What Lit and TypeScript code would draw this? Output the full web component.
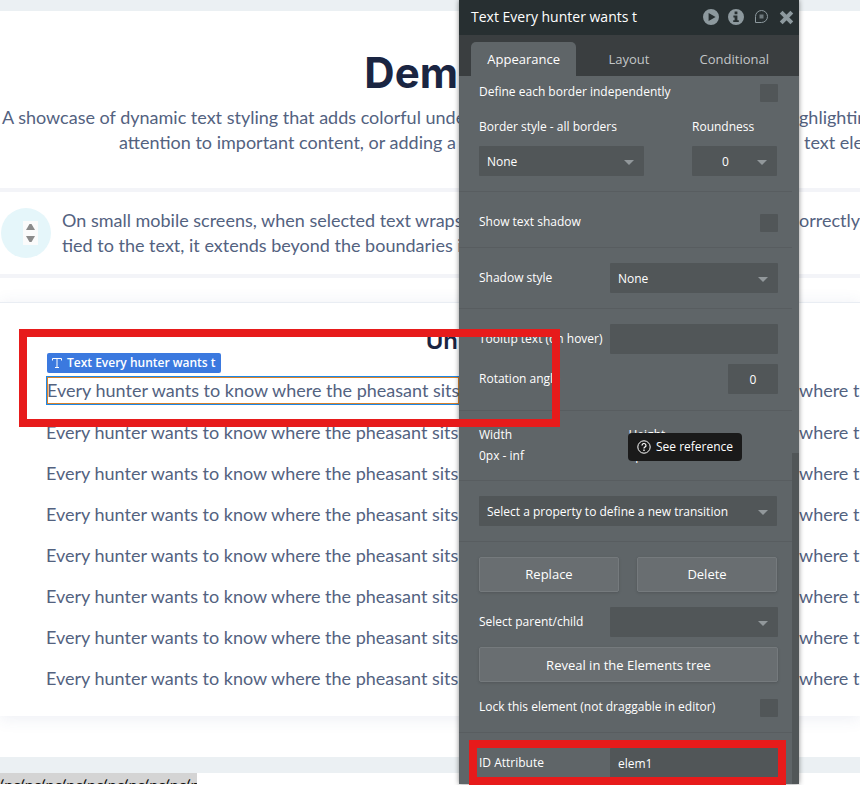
import { LitElement, html, css, svg } from "lit";
import { customElement, property } from "lit/decorators.js";

const ROWS = Array.from({ length: 7 }, (_, i) => i);
const SENTENCE = "Every hunter wants to know where the pheasant sits.";

@customElement("drop-down")
class DropDown extends LitElement {
  static styles = css`
    :host {
      display: block;
      position: relative;
    }
    select {
      appearance: none;
      display: block;
      box-sizing: border-box;
      width: 100%;
      height: 30px;
      margin: 0;
      padding: 2px 24px 0 8px;
      border: 0;
      border-radius: 1px;
      background: #515658;
      color: #fff;
      font: 500 12px/28px "Open Sans", sans-serif;
    }
    select.centered {
      padding: 2px 18px 0 0;
      text-align: center;
      text-align-last: center;
    }
    .arrow {
      position: absolute;
      right: 10px;
      top: 14px;
      width: 10px;
      height: 5px;
      background: #92989b;
      clip-path: polygon(0 0, 100% 0, 50% 100%);
      pointer-events: none;
    }
  `;
  @property() value = "";
  @property() name = "";
  @property({ type: Boolean }) centered = false;

  render() {
    return html`<select class=${this.centered ? "centered" : ""} aria-label=${this.name}>
        <option>${this.value}</option>
      </select>
      <span class="arrow"></span>`;
  }
}

@customElement("property-editor")
class PropertyEditor extends LitElement {
  static styles = css`
    :host {
      display: block;
      box-sizing: border-box;
      background: #5f6568;
      color: #fff;
      font: 500 12px/20px "Open Sans", sans-serif;
      box-shadow: 0 0 5px rgba(0, 0, 0, 0.45);
    }
    header {
      display: flex;
      align-items: center;
      height: 35px;
      padding: 0 5px 0 12px;
      background: #272f31;
      font-size: 14px;
    }
    h2 {
      flex: 1;
      margin: 0;
      padding-bottom: 2px;
      font-size: 14px;
      font-weight: 500;
    }
    .tools {
      display: flex;
      gap: 9px;
      padding-bottom: 2px;
    }
    .tools button {
      display: block;
      width: 16px;
      height: 16px;
      padding: 0;
      border: 0;
      background: none;
      color: #8d999e;
    }
    .tools svg {
      display: block;
    }
    nav {
      display: grid;
      grid-template-columns: repeat(3, 1fr);
      height: 34px;
      padding: 7px 12px 0;
      background: #3a3e40;
    }
    nav button {
      padding: 0;
      border: 0;
      border-radius: 5px 5px 0 0;
      background: none;
      color: #c3c6c8;
      font: 500 13px/34px "Open Sans", sans-serif;
    }
    nav button.active {
      background: #5f6568;
      color: #fff;
    }
    .body {
      position: relative;
      padding-right: 7px;
    }
    .thumb {
      position: absolute;
      right: 0;
      top: 377px;
      bottom: 0;
      width: 7px;
      background: #515658;
    }
    section {
      padding: 15px 14px 15px 20px;
      border-bottom: 1px solid #585d60;
    }
    section.first {
      padding-top: 8px;
    }
    section.loose {
      padding-top: 22px;
    }
    section.angle {
      padding-bottom: 16px;
    }
    section.size {
      padding: 14px 14px 14px 20px;
    }
    section.last {
      padding-bottom: 6px;
      border: 0;
    }
    .row {
      display: flex;
      justify-content: space-between;
      align-items: center;
    }
    .check {
      height: 18px;
    }
    .check label {
      padding-bottom: 2px;
    }
    .gap-s {
      margin-top: 10px;
    }
    .gap-m {
      margin-top: 15px;
    }
    .short {
      padding-right: 1px;
    }
    input {
      box-sizing: border-box;
      margin: 0;
      border: 0;
      border-radius: 1px;
      background: #515658;
      color: #fff;
      font: 500 12px/20px "Open Sans", sans-serif;
    }
    input[type="checkbox"] {
      appearance: none;
      width: 18px;
      height: 18px;
    }
    input[type="text"] {
      width: 168px;
      height: 30px;
      padding: 0 8px;
    }
    input.number[type="text"] {
      width: 50px;
      padding: 0;
      text-align: center;
    }
    .field {
      width: 168px;
    }
    .pair {
      display: grid;
      grid-template-columns: 165px 85px;
      justify-content: space-between;
      row-gap: 9px;
    }
    .halves {
      display: grid;
      grid-template-columns: 1fr 1fr;
      row-gap: 1px;
    }
    .buttons {
      display: grid;
      grid-template-columns: 1fr 1fr;
      gap: 18px;
    }
    .action {
      width: 100%;
      height: 35px;
      padding: 0 0 2px;
      border: 1px solid #757a7d;
      border-radius: 2px;
      background: #696e71;
      box-shadow: 0 1px 3px rgba(0, 0, 0, 0.15);
      color: #fff;
      font: 500 13px/20px "Open Sans", sans-serif;
    }
    .action.gap-s {
      padding: 0;
    }
    .lock {
      margin-top: 17px;
    }
    .tip {
      position: absolute;
      left: 169px;
      top: 357px;
      display: flex;
      align-items: center;
      gap: 5px;
      height: 28px;
      padding: 0 9px;
      border-radius: 4px;
      background: #1a1a1a;
      white-space: nowrap;
    }
  `;

  render() {
    return html`
      <header>
        <h2>Text Every hunter wants t</h2>
        <div class="tools">
          <button aria-label="Preview">
            <svg width="16" height="16" viewBox="0 0 16 16">
              <path fill="currentColor" fill-rule="evenodd" d="M8 0a8 8 0 1 0 0 16A8 8 0 0 0 8 0ZM5.6 4v8l7-4Z" />
            </svg>
          </button>
          <button aria-label="Info">
            <svg width="16" height="16" viewBox="0 0 16 16">
              <path
                fill="currentColor"
                fill-rule="evenodd"
                d="M8 0a8 8 0 1 0 0 16A8 8 0 0 0 8 0ZM6.6 2.6h2.8v2.6H6.6ZM5.4 6.6h4v4.6h1.4V13H5.2v-1.8h1.4V8.4H5.4Z"
              />
            </svg>
          </button>
          <button aria-label="Comments">
            <svg width="16" height="16" viewBox="0 0 16 16" fill="none" stroke="currentColor">
              <path d="M2.5 13.5V7.5A6 6 0 0 1 8.5 1.5A6 6 0 0 1 8.5 13.5Z" />
              <path d="M6.5 5.5h4v4h-4Z" fill="currentColor" stroke="none" opacity="0.7" />
            </svg>
          </button>
          <button aria-label="Close">
            <svg width="16" height="16" viewBox="0 0 16 16">
              <path
                d="M4.6 4.6l7.8 7.8M12.4 4.6l-7.8 7.8"
                stroke="currentColor"
                stroke-width="4"
                stroke-linecap="square"
              />
            </svg>
          </button>
        </div>
      </header>
      <nav>
        <button class="active">Appearance</button>
        <button>Layout</button>
        <button>Conditional</button>
      </nav>
      <div class="body">
        <section class="first">
          <div class="row check">
            <label for="each">Define each border independently</label>
            <input id="each" type="checkbox" />
          </div>
          <div class="pair gap-m short">
            <span>Border style - all borders</span>
            <span>Roundness</span>
            <drop-down name="Border style" value="None"></drop-down>
            <drop-down name="Roundness" value="0" centered></drop-down>
          </div>
        </section>
        <section class="loose">
          <div class="row check">
            <label for="shadow">Show text shadow</label>
            <input id="shadow" type="checkbox" />
          </div>
        </section>
        <section>
          <div class="row">
            <span>Shadow style</span>
            <drop-down class="field" name="Shadow style" value="None"></drop-down>
          </div>
        </section>
        <section class="angle">
          <div class="row">
            <label for="tooltip">Tooltip text (on hover)</label>
            <input id="tooltip" type="text" />
          </div>
          <div class="row gap-s">
            <label for="rotation">Rotation angle</label>
            <input id="rotation" class="number" type="text" value="0" />
          </div>
        </section>
        <section class="size">
          <div class="halves">
            <span>Width</span>
            <span>Height</span>
            <span>0px - inf</span>
            <span>0px - inf</span>
          </div>
        </section>
        <section>
          <drop-down class="short" name="Transition" value="Select a property to define a new transition"></drop-down>
        </section>
        <section>
          <div class="buttons short">
            <button class="action">Replace</button>
            <button class="action">Delete</button>
          </div>
          <div class="row gap-m">
            <span>Select parent/child</span>
            <drop-down class="field" name="Select parent/child"></drop-down>
          </div>
          <button class="action gap-s">Reveal in the Elements tree</button>
          <div class="row check lock">
            <label for="lock">Lock this element (not draggable in editor)</label>
            <input id="lock" type="checkbox" />
          </div>
        </section>
        <section class="last">
          <div class="row">
            <label for="ident">ID Attribute</label>
            <input id="ident" type="text" value="elem1" />
          </div>
        </section>
        <div class="thumb"></div>
        <div class="tip" role="tooltip">
          <svg width="14" height="14" viewBox="0 0 14 14" fill="none" stroke="#fff">
            <circle cx="7" cy="7" r="6.2" />
            <path d="M5 5.4a2 1.9 0 1 1 2.9 1.7q-.9.5-.9 1.4" stroke-width="1.2" />
            <path d="M7 9.6v1.4" stroke-width="1.3" />
          </svg>
          See reference
        </div>
      </div>
    `;
  }
}

@customElement("app-root")
class AppRoot extends LitElement {
  static styles = css`
    :host {
      display: block;
      position: relative;
      overflow: hidden;
      min-height: 100vh;
      background: #fff;
      color: #53627f;
      font: 18px/25px Lato, sans-serif;
    }
    .band {
      height: 11px;
      background: #ebf0f3;
    }
    .band.low {
      height: 16px;
    }
    .split {
      display: grid;
      grid-template-columns: minmax(0, 1fr) 61px;
      column-gap: 340px;
      align-items: center;
      white-space: nowrap;
    }
    h1,
    h3 {
      margin: 0;
      color: #1a2542;
      font-family: Inter, sans-serif;
      text-align: right;
      padding-right: 1px;
    }
    h1 {
      font-size: 42px;
      font-weight: 700;
      line-height: 48px;
    }
    h3 {
      font-size: 24px;
      font-weight: 600;
      line-height: 27px;
    }
    .intro {
      padding: 38px 0 33px;
      border-bottom: 4px solid #f3f4f8;
    }
    .copy {
      padding-top: 8px;
    }
    .line1 {
      padding-left: 2px;
    }
    .line2 {
      padding-left: 119px;
    }
    .indent {
      padding-left: 5px;
    }
    .note {
      padding: 16px 0;
      border-bottom: 4px solid #f3f4f8;
      align-items: start;
    }
    .note .left {
      display: flex;
      align-items: center;
      gap: 11px;
      padding-left: 1px;
    }
    .disc {
      display: flex;
      align-items: center;
      justify-content: flex-end;
      flex: none;
      box-sizing: border-box;
      width: 50px;
      height: 50px;
      padding-right: 13px;
      border-radius: 50%;
      background: #e5f6fa;
    }
    .spin {
      display: grid;
      width: 15px;
      height: 24px;
      background: #fbfbfb;
    }
    .spin button {
      display: grid;
      place-items: center;
      padding: 0;
      border: 0;
      background: none;
    }
    .card {
      margin-top: 24px;
      padding: 24px 0 25px;
      border-top: 1px solid #e9edf3;
      box-shadow: 0 2px 16px rgba(60, 80, 140, 0.1);
    }
    .rows {
      display: grid;
      gap: 16px;
      padding-top: 22px;
    }
    .rows .left {
      padding-left: 46px;
    }
    .rows .selected {
      position: relative;
      margin: 1px 0 0 47px;
      padding: 0;
      line-height: 27px;
      outline: 1px solid #1e88e5;
      box-shadow: inset 0 0 0 1px #d9822b;
    }
    .tag {
      position: absolute;
      left: 0;
      bottom: 31px;
      display: flex;
      align-items: center;
      gap: 5px;
      height: 20px;
      padding: 0 5px;
      border-radius: 2px;
      background: #3b79df;
      color: #fff;
      font: 600 12px/20px "Open Sans", sans-serif;
    }
    .tail {
      margin-top: 41px;
    }
    .scrap {
      width: 197px;
      height: 11px;
      overflow: hidden;
      background: #d4d4d4;
      color: #111;
      font-size: 16px;
      line-height: 24px;
      white-space: nowrap;
    }
    property-editor {
      position: absolute;
      top: 0;
      right: 61px;
      width: 340px;
    }
    .mark {
      position: absolute;
      box-sizing: border-box;
      border: 8px solid #e71b1b;
      pointer-events: none;
    }
    .mark.text {
      left: 19px;
      right: 300px;
      top: 329px;
      height: 98px;
    }
    .mark.ident {
      right: 74px;
      width: 317px;
      top: 740px;
      height: 45px;
    }
  `;

  arrow(d: string) {
    return html`<svg width="9" height="6" viewBox="0 0 9 6">${svg`<path d=${d} fill="#8b8b8b" />`}</svg>`;
  }

  render() {
    return html`
      <main>
        <div class="band"></div>
        <div class="intro">
          <div class="split"><h1>Dem</h1></div>
          <div class="copy">
            <div class="split">
              <span class="line1">A showcase of dynamic text styling that adds colorful unde</span>
              <span>ghlighting</span>
            </div>
            <div class="split">
              <span class="line2">attention to important content, or adding a</span>
              <span class="indent">text elements</span>
            </div>
          </div>
        </div>
        <div class="note split">
          <div class="left">
            <div class="disc">
              <div class="spin">
                <button aria-label="Increase">${this.arrow("M0 6 3.5 0h2L9 6Z")}</button>
                <button aria-label="Decrease">${this.arrow("M0 0 3.5 6h2L9 0Z")}</button>
              </div>
            </div>
            <div>On small mobile screens, when selected text wraps<br />tied to the text, it extends beyond the boundaries in</div>
          </div>
          <span>orrectly</span>
        </div>
        <div class="card">
          <div class="split"><h3>Un</h3></div>
          <div class="rows">
            <div class="split">
              <div class="left selected">
                <span class="tag">
                  <svg width="10" height="10" viewBox="0 0 10 10" fill="none" stroke="#fff">
                    <path d="M.5 2.5v-2h9v2M5 .5v9M3 9.5h4" />
                  </svg>
                  Text Every hunter wants t
                </span>
                ${SENTENCE}
              </div>
              <span>where the</span>
            </div>
            ${ROWS.map(() => html`<div class="split"><span class="left">${SENTENCE}</span><span>where the</span></div>`)}
          </div>
        </div>
        <div class="tail band low"></div>
        <div class="scrap">(nc(nc(nc(nc(nc(nc(nc(nc(nc(nc(nc</div>
      </main>
      <property-editor></property-editor>
      <div class="mark text"></div>
      <div class="mark ident"></div>
    `;
  }
}
